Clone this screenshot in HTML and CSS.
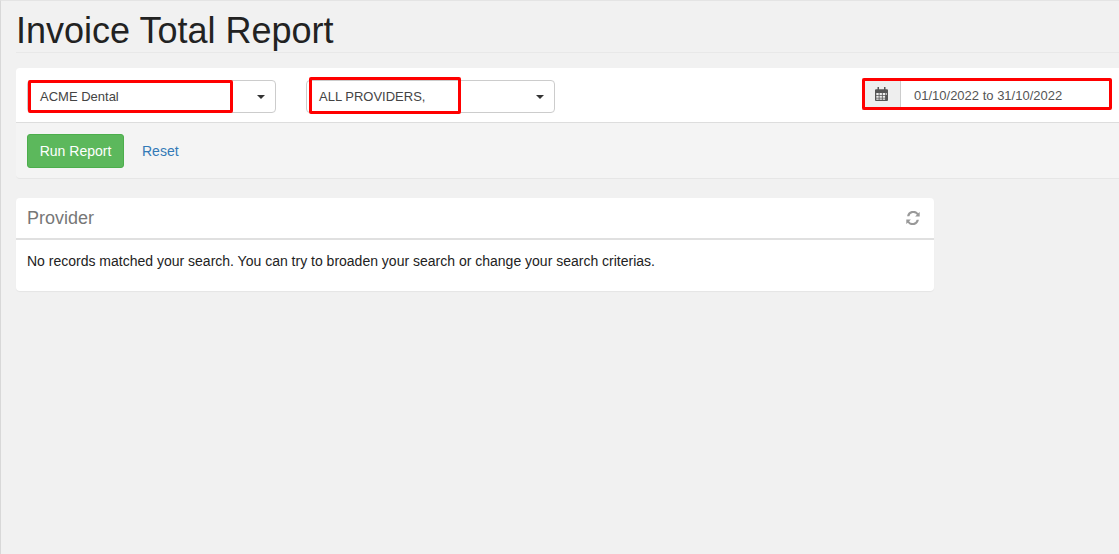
FILE: index.html
```html
<!DOCTYPE html>
<html lang="en">
<head>
  <meta charset="UTF-8">
  <meta name="viewport" content="width=device-width, initial-scale=1.0">
  <title>Invoice Total Report</title>
  <link rel="stylesheet" href="styles.css">
</head>
<body>
  <div class="page">
    <div class="page-header">
      <h1>Invoice Total Report</h1>
    </div>

    <div class="filter-panel">
      <div class="filter-body">
        <div class="select-box select-practice">
          <span>ACME Dental</span>
          <i class="caret"></i>
          <div class="mark mark-practice"></div>
        </div>
        <div class="select-box select-provider">
          <span>ALL PROVIDERS,</span>
          <i class="caret"></i>
          <div class="mark mark-provider"></div>
        </div>
        <div class="date-group">
          <div class="date-addon">
            <svg width="13" height="14" viewBox="0 0 13 14">
              <path fill="#555" fill-rule="evenodd" d="M2.5 0h1.5v2.2h5V0h1.5v2.2H12a1 1 0 0 1 1 1V13a1 1 0 0 1-1 1H1a1 1 0 0 1-1-1V3.200a1 1 0 0 1 1-1h1.500zM1.300 6v1.900h2.400V6zm3.200 0v1.900h2.400V6h-2.400zm3.200 0v1.900h2.400V6H7.700zm3.100 0v1.900h.9V6zM1.300 8.800v1.900h2.400V8.800zm3.200 0v1.900h2.400V8.800H4.500zm3.200 0v1.900h2.400V8.800H7.700zM1.300 11.500v1.200h2.400v-1.200zm3.200 0v1.200h2.400v-1.200zm3.200 0v1.200h2.400v-1.200z"/>
            </svg>
          </div>
          <div class="date-input">01/10/2022 to 31/10/2022</div>
          <div class="mark mark-date"></div>
        </div>
      </div>
      <div class="filter-footer">
        <button class="btn-run">Run Report</button>
        <a class="link-reset" href="#">Reset</a>
      </div>
    </div>

    <div class="result-panel">
      <div class="result-head">
        <h2>Provider</h2>
        <svg class="icon-refresh" width="14" height="14" viewBox="0 0 14 14">
          <path fill="#999" d="M13.700 1v4.600H9.100l1.800-1.800A4.200 4.200 0 0 0 3.300 5.200H1.100a6.300 6.300 0 0 1 11.100-3zM.3 13V8.400h4.600L3.100 10.200a4.200 4.200 0 0 0 7.600-1.400h2.200a6.300 6.300 0 0 1-11.100 3z"/>
        </svg>
      </div>
      <div class="result-body">No records matched your search. You can try to broaden your search or change your search criterias.</div>
    </div>
  </div>
</body>
</html>
```

FILE: styles.css
```css
body {
  margin: 0;
  height: 554px;
  overflow: hidden;
  box-sizing: border-box;
  background-color: #f1f1f1;
  border-top: 1px solid #e4e4e4;
  border-left: 1px solid #d8d8d8;
  font-family: "Liberation Sans", Arial, sans-serif;
  font-size: 14px;
  color: #333;
}
.page {
  padding-left: 15px;
}
.page-header {
  height: 51px;
  border-bottom: 1px solid #e8e8e8;
  box-sizing: content-box;
}
.page-header h1 {
  margin: 0;
  padding-top: 10px;
  font-size: 36px;
  line-height: 40px;
  font-weight: 400;
  color: #222;
}
.filter-panel {
  margin-top: 15px;
  margin-right: -2px;
  background-color: #f4f4f4;
  border-radius: 4px 0 0 4px;
  border-bottom: 1px solid #e6e6e6;
}
.filter-body {
  display: flex;
  align-items: flex-start;
  height: 55px;
  box-sizing: border-box;
  padding: 12px 0 0 11px;
  background-color: #fff;
  border-radius: 4px 0 0 0;
  border-bottom: 1px solid #ddd;
}
.select-box {
  position: relative;
  display: flex;
  align-items: center;
  justify-content: space-between;
  width: 249px;
  height: 33px;
  box-sizing: border-box;
  padding: 0 10px 0 12px;
  background-color: #fff;
  border: 1px solid #ccc;
  border-radius: 4px;
  color: #444;
  font-size: 13px;
}
.select-provider {
  margin-left: 30px;
}
.caret {
  width: 0;
  height: 0;
  border-top: 4px solid #333;
  border-left: 4px solid transparent;
  border-right: 4px solid transparent;
}
.mark {
  position: absolute;
  box-sizing: border-box;
  border: 3px solid #f00;
  border-radius: 2px;
}
.mark-practice {
  left: 0;
  top: -1px;
  width: 205px;
  height: 33px;
}
.mark-provider {
  left: 2px;
  top: -4px;
  width: 152px;
  height: 37px;
}
.mark-date {
  left: 0;
  top: 0;
  width: 250px;
  height: 32px;
}
.date-group {
  position: relative;
  display: flex;
  margin-left: auto;
  margin-top: -2px;
  width: 259px;
  height: 32px;
  font-size: 13px;
}
.date-addon {
  display: flex;
  align-items: center;
  justify-content: center;
  width: 39px;
  box-sizing: border-box;
  background-color: #eee;
  border-right: 1px solid #ccc;
  border-bottom: 1px solid #ccc;
}
.date-input {
  flex: 1;
  padding-left: 13px;
  line-height: 35px;
  color: #555;
  font-size: 13px;
}
.filter-footer {
  display: flex;
  align-items: center;
  height: 55px;
  padding-left: 11px;
}
.btn-run {
  width: 97px;
  height: 34px;
  padding: 0;
  background-color: #5cb85c;
  border: 1px solid #4cae4c;
  border-radius: 3px;
  color: #fff;
  font-family: inherit;
  font-size: 14px;
  cursor: pointer;
}
.link-reset {
  margin-left: 18px;
  color: #337ab7;
  font-size: 14px;
  text-decoration: none;
}
.result-panel {
  width: 918px;
  height: 93px;
  margin-top: 19px;
  background-color: #fff;
  border-radius: 4px;
  box-shadow: 0 1px 1px rgba(0,0,0,0.05);
}
.result-head {
  display: flex;
  align-items: center;
  justify-content: space-between;
  height: 40px;
  padding: 0 14px 0 11px;
  border-bottom: 2px solid #e0e0e0;
}
.result-head h2 {
  margin: 0;
  font-size: 18px;
  font-weight: 400;
  color: #777;
}
.result-body {
  padding: 13px 11px 0;
  font-size: 14px;
  line-height: 16px;
  color: #222;
}
```
